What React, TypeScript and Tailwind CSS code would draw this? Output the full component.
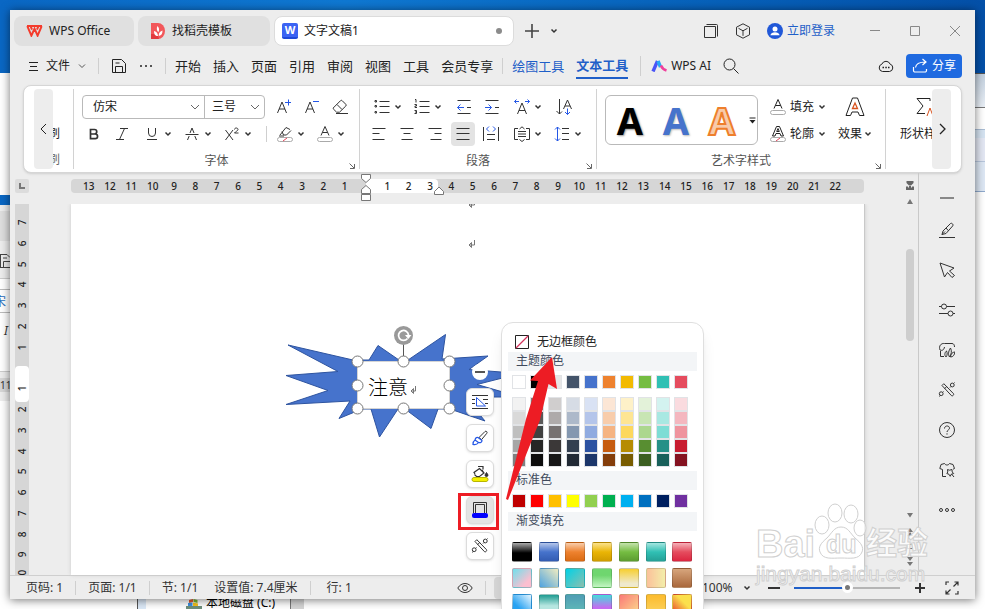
import React, { useState } from "react";
import clsx from "clsx";

interface IconProps {
  size?: number;
  className?: string;
  width?: number;
  children: React.ReactNode;
}

const Icon = ({ size = 16, className, width = 1, children }: IconProps) => (
  <svg
    width={size}
    height={size}
    viewBox={`0 0 ${size} ${size}`}
    fill="none"
    stroke="currentColor"
    strokeWidth={width}
    className={clsx("shrink-0", className)}
    aria-hidden="true"
  >
    {children}
  </svg>
);

const BLUE = "#2457e6";

const Caret = () => (
  <svg width="8" height="6" viewBox="0 0 8 6" fill="none" stroke="#333" strokeWidth="1.5" className="shrink-0">
    <path d="M1.500 1.500 4 4 6.500 1.500" />
  </svg>
);

const Chevron = () => (
  <svg width="10" height="6" viewBox="0 0 10 6" fill="none" stroke="#666" className="shrink-0">
    <path d="M1 1 5 5 9 1" />
  </svg>
);

const Divider = ({ className }: { className?: string }) => (
  <span className={clsx("w-px shrink-0 bg-[#cfcfcf]", className)} />
);

interface ToolProps {
  label: string;
  active?: boolean;
  children: React.ReactNode;
}

const Tool = ({ label, active, children }: ToolProps) => (
  <button aria-label={label} className="w-7 h-6 shrink-0 flex items-center justify-center">
    <span className={clsx("size-6 flex items-center justify-center rounded", active && "bg-[#e3e3e3]")}>{children}</span>
  </button>
);

const DropTool = ({ label, children }: ToolProps) => (
  <button aria-label={label} className="w-10 h-6 shrink-0 flex items-center">
    <span className="w-6 flex justify-center">{children}</span>
    <Caret />
  </button>
);

const Launcher = () => (
  <button aria-label="更多设置" className="absolute right-1 bottom-0 text-[#666]">
    <Icon size={6}>
      <path d="M.5.5 5 5M5.500 1v4.500H1" />
    </Icon>
  </button>
);

const WandIcon = () => (
  <Icon size={18}>
    <path d="m4 4.500 1.800-1.800 9.700 10c.8 1-1 2.800-2 2zM6.500 7.800l2.200-2.300" />
    <circle cx="3.200" cy="12.700" r="1.900" />
    <circle cx="14.300" cy="4" r="1.900" />
    <path d="M1.500 15.500l.7-1.200M16.500 1.500l-1 1M12 6.500l1-1M5.500 10.500l-1 1" />
  </Icon>
);

/* ---------- title bar ---------- */

const TitleBar = () => (
  <header className="h-[42px] shrink-0 flex items-center pl-1">
    <div className="flex gap-1 text-xs">
      <button className="w-[120px] h-[30px] rounded-lg bg-[#e0e0e0] flex items-center gap-1.5 px-3">
        <svg width="17" height="12" viewBox="0 0 17 12" fill="none" stroke="#f43b2c" strokeWidth="2">
          <path d="M1 1h15M1.300 1.200 5.400 10.600 8.500 3.600l3.100 7L15.700 1.200M6 4.600 4.600 1.200M11 4.600 12.400 1.200" />
        </svg>
        WPS Office
      </button>
      <button className="w-[132px] h-[30px] rounded-lg bg-[#e0e0e0] flex items-center gap-1.5 px-3">
        <svg width="16" height="16" viewBox="0 0 16 16">
          <path d="M1 0h7a7 8 0 0 1 0 16H1z" fill="#f2575a" />
          <path d="M1 11h6l2 5H1z" fill="#e23a3e" />
          <path d="M8 13c-3 0-4-2-4-5 2 .5 3.400 1.600 3.700 3.500M7.500 3c1.800 2 2 4 .8 6.300C6.500 7.500 6.500 5 7.500 3M8.800 13c2.800-.5 3.800-2.400 3.700-5.500-2 .7-3.500 2-3.700 4" fill="#fff" />
        </svg>
        找稻壳模板
      </button>
      <button className="w-[240px] h-[30px] rounded-lg bg-white border border-[#dcdcdc] flex items-center px-[7px] gap-1.5">
        <span className="size-4 rounded-xs bg-[#3b63f3] border-b-2 border-[#1f49d8] text-white text-[11px] leading-[14px] font-bold text-center">
          W
        </span>
        文字文稿1
        <span className="ml-auto mr-1 size-1.5 rounded-full bg-[#8b8b8b]" />
      </button>
    </div>
    <button aria-label="新建" className="w-9 flex justify-center text-[#444]">
      <Icon width={1.600}>
        <path d="M8 1v14M1 8h14" />
      </Icon>
    </button>
    <button aria-label="标签列表">
      <Caret />
    </button>
    <div className="ml-auto flex items-center text-[#333]">
      <button aria-label="窗口" className="w-8 flex justify-center">
        <Icon>
          <path d="M1.500 3.500h11v11h-11zM3.500 1.500h10a1 1 0 0 1 1 1v11" />
        </Icon>
      </button>
      <button aria-label="应用" className="w-8 flex justify-center">
        <Icon>
          <path d="M8 .8 14.500 4.200v7.600L8 15.200 1.500 11.800V4.200zM3.500 5.300 8 7.800l4.500-2.500M8 7.800v5" />
        </Icon>
      </button>
      <button className="ml-2 mr-5 flex items-center gap-1 text-xs text-[#1f5fc8]">
        <svg width="16" height="16" viewBox="0 0 16 16">
          <circle cx="8" cy="8" r="8" fill="#2158d8" />
          <circle cx="8" cy="6" r="2.500" fill="#fff" />
          <path d="M3.400 12.200c.6-4 8.600-4 9.200 0z" fill="#fff" />
        </svg>
        立即登录
      </button>
      <button aria-label="最小化" className="w-10 flex justify-center text-[#888]">
        <Icon size={10}>
          <path d="M0 4.500h10" />
        </Icon>
      </button>
      <button aria-label="最大化" className="w-10 flex justify-center text-[#888]">
        <Icon size={10}>
          <path d="M.5.5h9v9h-9z" />
        </Icon>
      </button>
      <button aria-label="关闭" className="w-10 flex justify-center text-[#888]">
        <Icon size={10}>
          <path d="m0 0 10 10M10 0 0 10" />
        </Icon>
      </button>
    </div>
  </header>
);

/* ---------- menu bar ---------- */

const MENU_TABS = ["开始", "插入", "页面", "引用", "审阅", "视图", "工具", "会员专享"];

const MenuBar = () => (
  <nav className="h-7 mb-[5px] shrink-0 flex items-center pl-[19px] pr-[13px] text-xs text-[#222]">
    <button className="flex items-center gap-2">
      <Icon size={9}>
        <path d="M0 .5h9M1 4.500h7M0 8.500h9" />
      </Icon>
      文件
      <svg width="8" height="5" viewBox="0 0 8 5" fill="none" stroke="#555">
        <path d="m1 .5 3 3 3-3" />
      </svg>
    </button>
    <Divider className="h-4 mx-3" />
    <button aria-label="保存">
      <Icon>
        <path d="M1.500 1.500h9l4 4v9h-13zM4.500 14v-5.500h7V14M4.500 5h4" />
      </Icon>
    </button>
    <button aria-label="更多" className="ml-3 text-[#555]">
      <Icon size={14} width={2}>
        <path d="M1 7h2M6 7h2M11 7h2" />
      </Icon>
    </button>
    <Divider className="h-4 ml-3 mr-[9px]" />
    <div className="flex gap-3 text-[13px] leading-6">
      {MENU_TABS.map((tab) => (
        <button key={tab}>{tab}</button>
      ))}
    </div>
    <Divider className="h-4 mx-[9px]" />
    <div className="flex gap-3 text-[13px] leading-6 text-[#1f5fc8]">
      <button>绘图工具</button>
      <button className="font-bold border-b-2 border-[#1f5fc8]">文本工具</button>
    </div>
    <Divider className="h-5 ml-3 mr-2.5" />
    <button className="flex items-center gap-1">
      <svg width="16" height="12" viewBox="0 0 16 12" fill="none" strokeWidth="3.400">
        <path d="M2 11.500 6.500 1" stroke="#4a54f7" />
        <path d="m7 1 2.500 6" stroke="#27a8f5" />
        <path d="M10 5.500c1 3 2.500 4 5.500 5" stroke="#f0409c" strokeWidth="2.600" />
      </svg>
      WPS AI
    </button>
    <button aria-label="搜索" className="ml-3">
      <Icon>
        <circle cx="6.500" cy="6.500" r="5.500" />
        <path d="m10.500 10.500 5 5" />
      </Icon>
    </button>
    <div className="ml-auto flex items-center gap-3">
      <button aria-label="云同步">
        <Icon>
          <path d="M4.500 13.500a3.800 3.800 0 0 1-.6-7.400 4.400 4.400 0 0 1 8.200 0 3.800 3.800 0 0 1-.6 7.400z" />
          <path d="M4.500 9.500h1.500M7.300 9.500h1.500M10 9.500h1.500" strokeWidth="1.500" />
        </Icon>
      </button>
      <button className="h-6 px-1.5 rounded bg-[#1f6ae0] text-white flex items-center gap-1">
        <Icon width={1.200}>
          <path d="M1.500 9v3.500a1.500 1.500 0 0 0 1.500 1.500h10a1.500 1.500 0 0 0 1.500-1.500V11M3.500 9.500c.5-4 4-5.500 10-5.500M10.500 1l3.500 3-3.500 3" />
        </Icon>
        分享
      </button>
    </div>
  </nav>
);

/* ---------- ribbon ---------- */

const RibbonGroup = ({ title, children }: { title: string; children: React.ReactNode }) => (
  <section className="relative h-20 shrink-0 flex flex-col border-r border-[#d2d2d2]">
    {children}
    <h2 className="mt-auto text-xs leading-4 text-center text-[#555]">{title}</h2>
    <Launcher />
  </section>
);

const FontGroup = () => (
  <RibbonGroup title="字体">
    <div className="flex pl-2 pt-1.5 pr-[5px] text-[#333]">
      <div className="h-6 mr-[5px] flex rounded border border-[#b9b9b9] text-xs text-[#222]">
        <label className="w-[121px] flex items-center pr-1">
          <select aria-label="字体" className="flex-1 appearance-none pl-2.5 outline-none">
            <option>仿宋</option>
            <option>宋体</option>
          </select>
          <Chevron />
        </label>
        <label className="w-[60px] flex items-center pr-1 border-l border-[#b9b9b9]">
          <select aria-label="字号" className="w-10 flex-1 appearance-none pl-[7px] outline-none">
            <option>三号</option>
            <option>四号</option>
          </select>
          <Chevron />
        </label>
      </div>
      <Tool label="增大字号">
        <Icon>
          <path d="m1.500 14 4.500-11 4.500 11M3 10h6" />
          <path d="M9 3.500h6M12.500.5v6" stroke={BLUE} />
        </Icon>
      </Tool>
      <Tool label="减小字号">
        <Icon>
          <path d="m1.500 14 4.500-11 4.500 11M3 10h6" />
          <path d="M9 2.500h6" stroke={BLUE} />
        </Icon>
      </Tool>
      <Tool label="清除格式">
        <Icon>
          <path d="M1.200 9 8.500 1.700a1.200 1.200 0 0 1 1.700 0l3.600 3.600a1.200 1.200 0 0 1 0 1.700L7.500 13.200H4.600L1.200 9.800zM5 5.500l5 5M4 14.500h12" />
        </Icon>
      </Tool>
    </div>
    <div className="flex items-center pl-1.5 pt-[3px] text-[#333]">
      <Tool label="加粗">
        <Icon size={12} width={1.700}>
          <path d="M2.500 1.500h4a2.200 2.200 0 0 1 0 4.500h-4zM2.500 6h4.700a2.300 2.300 0 0 1 0 4.700H2.500z" />
        </Icon>
      </Tool>
      <Tool label="倾斜">
        <Icon size={12}>
          <path d="M4 .5h8M0 11.500h8M8.500.5l-5 11" />
        </Icon>
      </Tool>
      <span className="w-1" />
      <DropTool label="下划线">
        <Icon size={12}>
          <path d="M2.500 0v5a3.500 3.500 0 0 0 7 0V0M1 11.500h10" />
        </Icon>
      </DropTool>
      <DropTool label="删除线">
        <Icon size={14}>
          <path d="M2.500 13 4.200 9M5 6l2-5 2 5M9.800 9l1.700 4M.5 7.500h13" />
        </Icon>
      </DropTool>
      <DropTool label="上标">
        <Icon size={14}>
          <path d="m.5 3 7.500 10M8 3 .5 13M9.500 2.500c0-2 3.500-2 3.500 0 0 1.300-2.500 2-3.500 3.500h4" />
        </Icon>
      </DropTool>
      <Divider className="h-4 mx-1.5" />
      <DropTool label="突出显示">
        <Icon>
          <path d="m3 9 6-7.500 4 2M5 5.500l1.500 3.500h3L14 4.500M2 10h5" />
          <rect x=".5" y="11.500" width="15" height="4" rx="2" stroke="#aaa" />
          <path d="m6 15 4-3" stroke="#e2455a" />
        </Icon>
      </DropTool>
      <DropTool label="字体颜色">
        <Icon>
          <path d="m4 9.500 4-9 4 9M5.500 6.500h5" />
          <rect x=".5" y="11.500" width="15" height="4" rx="2" stroke="#aaa" />
        </Icon>
      </DropTool>
    </div>
  </RibbonGroup>
);

const ParagraphGroup = () => (
  <RibbonGroup title="段落">
    <div className="flex pl-2.5 pt-1.5 text-[#333]">
      <DropTool label="项目符号">
        <Icon>
          <path d="M5.500 2.500h10M5.500 7.500h10M5.500 13.500h10" />
          <path d="M1 1.500h1.500v1.500H1zM1 6.500h1.500v1.500H1zM1 12.500h1.500v1.500H1z" />
        </Icon>
      </DropTool>
      <DropTool label="编号">
        <Icon>
          <path d="M5.500 2.500h10M5.500 7.500h10M5.500 13.500h10" />
          <path d="M1 .5h1v3M.5 5.500h2v1.500H1v1.500h2M.5 11.500h2v3h-2M1 13h1.500" />
        </Icon>
      </DropTool>
      <Tool label="减少缩进">
        <Icon>
          <path d="M1.500 1.500h13M1.500 14.500h13M11 8.500h4" />
          <path d="M1.500 8.500H8M4.500 5.500l-3 3 3 3" stroke={BLUE} />
        </Icon>
      </Tool>
      <Tool label="增加缩进">
        <Icon>
          <path d="M1.500 1.500h13M1.500 14.500h13M11 8.500h4" />
          <path d="M1 8.500h6.500M4.500 5.500l3 3-3 3" stroke={BLUE} />
        </Icon>
      </Tool>
      <span className="w-1" />
      <DropTool label="字符缩放">
        <Icon>
          <path d="m3.500 15 4.500-11 4.500 11M5 11.500h6" />
          <path d="M.5 2.500H5M2.500.5l-2 2 2 2M11 2.500h4.500M13.500.5l2 2-2 2" stroke={BLUE} />
        </Icon>
      </DropTool>
      <Tool label="排序">
        <Icon>
          <path d="M3.500 0v15M.5 12l3 3L6 12.500M7.500 10l4-9 4 9M9 7h5" />
          <path d="M11.500 9.500v6M9 13l2.500 2.500L14 13" stroke={BLUE} />
        </Icon>
      </Tool>
    </div>
    <div className="flex pl-[5px] pr-1.5 pt-[3px] text-[#333]">
      <Tool label="左对齐">
        <Icon>
          <path d="M1.500 2.500h13M1.500 7.500h7M1.500 13.500h12" />
        </Icon>
      </Tool>
      <Tool label="居中">
        <Icon>
          <path d="M1.500 2.500h13M4.500 7.500h7M2.500 13.500h11" />
        </Icon>
      </Tool>
      <Tool label="右对齐">
        <Icon>
          <path d="M1.500 2.500h13M7.500 7.500h7M3.500 13.500h11" />
        </Icon>
      </Tool>
      <Tool label="两端对齐" active>
        <Icon>
          <path d="M1.500 2.500h13M1.500 7.500h13M1.500 13.500h13" />
        </Icon>
      </Tool>
      <Tool label="分散对齐">
        <Icon>
          <path d="M.5 1v14M15.500 1v14M4 8.500h8M4 13.500h8" />
          <path d="m6 .5-2.500 2.500L6 5.500M10 .5l2.500 2.500-2.500 2.500" stroke={BLUE} />
        </Icon>
      </Tool>
      <span className="w-[5px]" />
      <DropTool label="对齐文本">
        <Icon>
          <path d="M4 2.500H.5v11H4M12 2.500h3.500v11H12M4 5.500h8M4 8h8M4 10.500h8M5.500 3 8 .8 10.500 3M5.500 13.500 8 15.500l2.500-2" />
        </Icon>
      </DropTool>
      <DropTool label="行距">
        <Icon>
          <path d="M8 2.500h7M8 7.500h7M8 13.500h7" />
          <path d="M3.500 1v14M1 3.500 3.500 1 6 3.500M1 12.500 3.500 15 6 12.500" stroke={BLUE} />
        </Icon>
      </DropTool>
    </div>
  </RibbonGroup>
);

const WordArtGroup = () => (
  <RibbonGroup title="艺术字样式">
    <div className="flex pl-2 pt-1.5 pr-[13px] text-xs text-[#222]">
      <div className="w-[153px] h-[50px] rounded-md border border-[#b9b9b9] flex items-center pl-px text-[38px] leading-none font-bold">
        <button className="w-[46px] text-black [text-shadow:1px_1px_2px_#999]">A</button>
        <button className="w-[46px] text-[#4673cc] [text-shadow:1px_1px_2px_#bbb]">A</button>
        <button className="w-[46px] text-[#f8cbaa] [-webkit-text-stroke:2px_#ee7f2c]">A</button>
        <button aria-label="更多样式" className="pl-1">
          <Icon size={7}>
            <path d="M.5 1h6" />
            <path d="M.5 3h6L3.500 6.500z" fill="currentColor" stroke="none" />
          </Icon>
        </button>
      </div>
      <div className="ml-3 flex flex-col gap-[3px]">
        <button className="h-6 flex items-center gap-1">
          <Icon>
            <path d="m4 9.500 4-9 4 9M5.500 6.500h5" />
            <rect x=".5" y="11.500" width="15" height="4" rx="2" stroke="#aaa" />
          </Icon>
          填充
          <Caret />
        </button>
        <button className="h-6 flex items-center gap-1">
          <Icon>
            <path d="M2.500 10 6.500.5h3l4 9.500h-2.500L10 7.500H6L5 10zM6.700 5.500 8 2.500l1.300 3z" />
            <rect x=".5" y="11.500" width="15" height="4" rx="2" stroke="#aaa" />
            <path d="m6 15 4-3" stroke="#e2455a" />
          </Icon>
          轮廓
          <Caret />
        </button>
      </div>
      <button className="ml-3 flex flex-col items-center gap-[3px]">
        <span className="h-6 flex items-center">
          <Icon size={20}>
            <path d="M1 18.500 7.500 1h5L19 18.500h-4.500L13 15H7l-1.500 3.500z" />
            <path d="M7.500 11.500 10 6l2.500 5.500z" stroke="#d8531e" strokeWidth="1.300" />
          </Icon>
        </span>
        <span className="h-6 flex items-center gap-0.5">
          效果
          <Caret />
        </span>
      </button>
    </div>
  </RibbonGroup>
);

const Ribbon = () => (
  <div className="h-[88px] ml-[13px] mr-[13px] px-2.5 shrink-0 flex items-center rounded-lg bg-white border border-[#d6d6d6] shadow">
    <button aria-label="向左滚动" className="w-[19px] h-20 shrink-0 rounded bg-[#ededed] flex items-center justify-center">
      <Icon size={12}>
        <path d="M8 1 3 6l5 5" />
      </Icon>
    </button>
    <div className="w-[21px] h-20 shrink-0 pt-9 border-r border-[#d2d2d2] text-xs">
      <div className="w-[7px] h-[18px] overflow-hidden flex justify-end leading-[18px]">刷</div>
      <div className="w-[7px] h-[18px] mt-2 overflow-hidden flex justify-end leading-[18px] text-[#666]">刷</div>
    </div>
    <FontGroup />
    <ParagraphGroup />
    <WordArtGroup />
    <div className="flex-1 min-w-0 h-20 pl-3.5 overflow-hidden text-xs text-[#222]">
      <button className="pt-1.5 flex flex-col items-center gap-[3px]">
        <span className="h-6 flex items-center">
          <Icon size={20}>
            <path d="M16 4V1.500H3l6 7.500-6 7.500h8" />
            <path d="m13 19 3-8 3 8" stroke="#d8531e" />
          </Icon>
        </span>
        <span className="h-6 leading-6 whitespace-nowrap">形状样式</span>
      </button>
    </div>
    <button aria-label="向右滚动" className="w-[19px] h-20 shrink-0 rounded bg-[#ededed] flex items-center justify-center">
      <Icon size={12} width={1.300}>
        <path d="m4 1 5 5-5 5" />
      </Icon>
    </button>
  </div>
);

/* ---------- rulers ---------- */

const H_MARKS = Array.from({ length: 36 }, (_, i) => Math.abs(i - 13));
const V_MARKS = Array.from({ length: 18 }, (_, i) => Math.abs(i - 7));

const HorizontalRuler = () => (
  <div className="h-[31px] shrink-0 flex items-start pt-1.5">
    <div className="w-[61px] shrink-0 pl-[5px]">
      <button aria-label="制表符" className="size-3.5 rounded-xs bg-[#dcdcdc] flex items-center justify-center">
        <Icon size={6} width={2} className="text-[#777]">
          <path d="M1 0v5h5" />
        </Icon>
      </button>
    </div>
    <div className="relative flex-1 h-3.5 rounded bg-[#d6d6d6] pl-[7px] pr-[18px]">
      <span className="absolute left-[295px] w-[72px] h-3.5 rounded-r bg-white" />
      <div className="relative grid grid-cols-36 text-[10px] leading-3.5 font-medium text-center text-[#222]">
        {H_MARKS.map((n, i) => (
          <span key={i}>{n > 0 && n}</span>
        ))}
      </div>
      <svg className="absolute left-[289px] -top-[6px]" width="86" height="32" viewBox="0 0 86 32" fill="#fff" stroke="#777">
        <path d="M1.500 1.500h9v4L6 9.500l-4.500-4zM1.500 20.500v-4l4.500-4 4.500 4v4zM1.500 21.500h9v6h-9zM74.500 21.500v-3l4.500-4.500 4.500 4.500v3z" />
      </svg>
    </div>
    <div className="w-[54px] shrink-0 flex justify-end pr-1 pt-0.5">
      <svg width="8" height="9" viewBox="0 0 8 9" fill="#666">
        <path d="M.5 0h7v2L5 4.500H3L.5 2zM0 5.500h2v1h1V5h2v1.500h1v-1h2V9H0z" />
      </svg>
    </div>
  </div>
);

const VerticalRuler = () => (
  <div className="relative w-3.5 ml-[5px] mr-[42px] shrink-0 pt-2 bg-[#d6d6d6] overflow-hidden">
    <span className="absolute top-[162px] left-0 w-3.5 h-9 rounded bg-white" />
    <div className="relative h-[374px] grid grid-rows-18 text-[10px] leading-3.5 font-medium text-[#222]">
      {V_MARKS.map((n, i) => (
        <span key={i} className="-rotate-90 flex items-center justify-center">
          {n > 0 && n}
        </span>
      ))}
    </div>
  </div>
);

/* ---------- drawing on the page ---------- */

const HANDLES = [
  [357.5, 361.5],
  [403.5, 361.5],
  [449.5, 361.5],
  [357.5, 385.5],
  [449.5, 385.5],
  [357.5, 408.5],
  [403.5, 408.5],
  [449.5, 408.5],
];

const Explosion = () => (
  <div className="absolute left-[208px] top-[120px] w-[240px] h-[120px]">
    <svg width="240" height="120" viewBox="279 324 240 120">
      <path
        d="M288 345 353 360H369L378 345.500 399 360H408L445.500 334.500 442 359 488 356 469 369.500 520 373.500 477 384.500 520 397 490 397 471 404 485 421 450 409H438L431 428.500 405 409H398L379.500 437 371 409H362L339 418.500 350 401 286 404.500 328 390.500 286 375.500 338 371.500z"
        fill="#4673cc"
        stroke="#2e54a0"
      />
      <rect x="357.500" y="361.500" width="92" height="47" fill="#fff" stroke="#d5d5d5" />
      <path d="M403.500 344v14" stroke="#555" />
      <circle cx="403.500" cy="335.500" r="9.500" fill="#999" />
      <path d="M407.500 338.500a5 5 0 1 1 1-3.500" fill="none" stroke="#fff" strokeWidth="1.800" />
      <path d="M405 335h6.500l-3.200 4z" fill="#fff" />
      {HANDLES.map(([x, y]) => (
        <circle key={`${x}-${y}`} cx={x} cy={y} r="5.500" fill="#fff" stroke="#777" />
      ))}
      <path d="M415.500 386v5h-4M413.500 388.500l-2.500 2.500 2.500 2.500z" fill="none" stroke="#777" />
    </svg>
    <p className="absolute left-[89px] top-[50px] text-[20px] leading-7 font-light text-black">注意</p>
  </div>
);

const ParagraphMark = ({ className }: { className?: string }) => (
  <svg width="7" height="8" viewBox="0 0 7 8" fill="none" stroke="#777" className={className}>
    <path d="M6.500 0v5h-5M3.500 2.500 1 5l2.500 2.500z" />
  </svg>
);

const QuickButton = ({ label, active, children }: ToolProps) => (
  <button
    aria-label={label}
    className={clsx(
      "size-7 rounded-md border border-[#dcdcdc] shadow flex items-center justify-center text-[#333]",
      active ? "bg-[#e3e3e3]" : "bg-white",
    )}
  >
    {children}
  </button>
);

const QuickTools = () => (
  <div className="absolute left-[395px] top-[160px] w-7 flex flex-col items-center gap-2">
    <button aria-label="收起" className="size-4 rounded-full bg-white flex items-center justify-center text-[#555]">
      <Icon size={10} width={2}>
        <path d="M0 5h10" />
      </Icon>
    </button>
    <QuickButton label="布局选项">
      <Icon size={18}>
        <path d="M1 2.500h16M1 6.500h3M12 6.500h5M1 10.500h3M14 10.500h3M1 15.500h16" />
        <path d="M5.500 4.500v8.500h9z" stroke={BLUE} fill="#fff" />
      </Icon>
    </QuickButton>
    <QuickButton label="形状样式">
      <Icon>
        <path d="m7 7.500 6-6c1-1 2.800.5 1.800 1.800L9.500 9.700z" />
        <path d="m6 7.500 4 3c0 2-2 2.500-3.500 2C5.500 14 3 15 1 14.500c0-2 .5-3.500 2-4.500.3-1.500 1.500-2.700 3-2.500zM3 10l3.500 2.500" stroke={BLUE} strokeWidth="1.200" />
      </Icon>
    </QuickButton>
    <QuickButton label="形状填充">
      <Icon size={18}>
        <path d="M4 9 3 7.500 8.500 3.500 13 8l-4.500 3.500H5.500L3.500 9.500M7 1.500h5v3M13 8l-2-3" strokeWidth="1.200" />
        <path d="m15.500 7.500 1.500 2.500a1.500 1.500 0 0 1-3 0z" fill="#333" />
        <rect x="1" y="12.500" width="16" height="4" rx="2" fill="#f4f000" stroke="#b9b600" />
      </Icon>
    </QuickButton>
    <QuickButton label="形状轮廓" active>
      <Icon size={18}>
        <path d="M2.500 12V1.500h13V12M4.500 12V3.500h9V12" />
        <rect x="1" y="12" width="16" height="5" rx="2" fill="#00f" stroke="none" />
      </Icon>
    </QuickButton>
    <QuickButton label="智能美化">
      <WandIcon />
    </QuickButton>
  </div>
);

/* ---------- outline colour menu ---------- */

const BASE_COLORS = ["#ffffff", "#000000", "#e7e6e6", "#44546a", "#4673cc", "#ee822f", "#f2ba02", "#75bd42", "#30c0b4", "#e54c5e"];

const SHADES = [
  ["#f2f2f2", "#7f7f7f", "#d0cece", "#d6dce5", "#d9e2f4", "#fce6d5", "#fef1c8", "#e3f2d9", "#d3f3f0", "#fadbdf"],
  ["#d9d9d9", "#595959", "#aeaaaa", "#adb9ca", "#b4c5ea", "#f8cdab", "#fee593", "#c8e5b3", "#a9e8e2", "#f4b7bf"],
  ["#bfbfbf", "#404040", "#767171", "#8497b0", "#90abe0", "#f5b482", "#fdd85e", "#acd78e", "#7eddd5", "#ef949e"],
  ["#a6a6a6", "#262626", "#3b3838", "#333f50", "#2c52a1", "#c65c10", "#b68c02", "#588e31", "#249087", "#c81d31"],
  ["#808080", "#0d0d0d", "#171717", "#222a35", "#1d376b", "#843e0b", "#795d01", "#3b5f21", "#18605a", "#851321"],
];

const STANDARD_COLORS = ["#c00000", "#ff0000", "#ffc000", "#ffff00", "#92d050", "#00b050", "#00b0f0", "#0070c0", "#002060", "#7030a0"];

const GRADIENTS = [
  "linear-gradient(#aaa, #000 55%)",
  "linear-gradient(#b5c6ea, #4673cc 50%, #335cb2)",
  "linear-gradient(#f8cdab, #ee822f 50%, #d96a12)",
  "linear-gradient(#fbe28c, #eab505 50%, #cf9c00)",
  "linear-gradient(#c4e2ac, #75bd42 50%, #5c9c30)",
  "linear-gradient(#a4e6e0, #30c0b4 50%, #25a096)",
  "linear-gradient(#f5b0b8, #e54c5e 50%, #dc2540)",
  "linear-gradient(135deg, #6fe0ec, #fbbfd0 75%)",
  "linear-gradient(45deg, #4fa3e0, #f0ecc0)",
  "linear-gradient(135deg, #00d2e6, #8fbfae)",
  "linear-gradient(#6fd66f 35%, #c3f5c3)",
  "linear-gradient(#f7cf30, #efe9cc 80%)",
  "linear-gradient(90deg, #fbc19a, #f3eeaa)",
  "linear-gradient(#d7a57c, #a9683c)",
  "linear-gradient(45deg, #27a2f2 30%, #e8f7ff)",
  "linear-gradient(#1f9c92, #b6e6e0 60%)",
  "linear-gradient(#4f9db4, #62bcb8)",
  "linear-gradient(#45dcdc, #c46cf0 70%)",
  "linear-gradient(135deg, #fb7a78, #fbd98c)",
  "linear-gradient(#fcbb2d, #fcd35e)",
  "linear-gradient(45deg, #e8452c, #fbe04c 60%)",
];

interface SwatchRowProps {
  colors: string[];
  onPick: (color: string) => void;
}

const SwatchRow = ({ colors, onPick }: SwatchRowProps) => (
  <div className="flex gap-1 px-2.5">
    {colors.map((color) => (
      <button
        key={color}
        aria-label={color}
        onClick={() => onPick(color)}
        className="size-3.5 border border-[#e1e3e6]"
        style={{ backgroundColor: color }}
      />
    ))}
  </div>
);

const MenuHeading = ({ children }: { children: React.ReactNode }) => (
  <h3 className="h-[19px] mx-1.5 px-2 bg-[#f3f5f7] text-xs leading-[18px] text-[#3f4a5c]">{children}</h3>
);

const ColorMenu = () => {
  const [, setColor] = useState<string>("");

  return (
    <div className="absolute z-10 left-[430px] top-[118px] w-[203px] h-[310px] pt-2 rounded-xl bg-white border border-[#dfdfdf] shadow-lg">
      <button className="h-[21px] pl-[13px] flex items-center gap-2 text-xs text-[#222]" onClick={() => setColor("")}>
        <Icon size={14}>
          <path d="M.5.5h13v13H.5z" />
          <path d="m1 13 12-12" stroke="#d4335c" strokeWidth="1.300" />
        </Icon>
        无边框颜色
      </button>
      <MenuHeading>主题颜色</MenuHeading>
      <div className="py-1">
        <SwatchRow colors={BASE_COLORS} onPick={setColor} />
        <div className="mt-2">
          {SHADES.map((row) => (
            <SwatchRow key={row[0]} colors={row} onPick={setColor} />
          ))}
        </div>
      </div>
      <MenuHeading>标准色</MenuHeading>
      <div className="py-1">
        <SwatchRow colors={STANDARD_COLORS} onPick={setColor} />
      </div>
      <MenuHeading>渐变填充</MenuHeading>
      <div className="mx-2.5 w-[180px] mt-[11px] grid grid-cols-7 gap-x-[7px] gap-y-1.5">
        {GRADIENTS.map((bg) => (
          <button
            key={bg}
            aria-label="渐变"
            className="size-5 rounded-xs border border-black/15"
            style={{ backgroundImage: bg }}
          />
        ))}
      </div>
    </div>
  );
};

const Annotations = () => (
  <>
    <span className="absolute z-20 left-[387px] top-[289px] w-[41px] h-[37px] border-3 border-[#ed1c24]" />
    <svg className="absolute z-20 left-[429px] top-[148px] pointer-events-none" width="64" height="152" viewBox="500 352 64 152">
      <path d="M552 357 530 380.500 538 381 526 419 506 499 508 500 540 420 548.500 384 557 389z" fill="#ed1c24" />
    </svg>
  </>
);

/* ---------- workspace ---------- */

const ScrollBar = () => (
  <div className="w-[53px] shrink-0 flex justify-end pr-[3px]">
    <div className="w-[10px] flex flex-col items-center text-[#777]">
      <svg width="6" height="5" viewBox="0 0 6 5" fill="currentColor" className="-mt-[5px]">
        <path d="M3 0 6 5H0z" />
      </svg>
      <span className="mt-[45px] w-2 h-[92px] rounded-full bg-[#cecece]" />
      <svg width="6" height="54" viewBox="0 0 6 54" className="mt-auto mb-2" fill="currentColor">
        <path d="M0 0h6L3 4.500zM3 15l3 4H0zM3 19l3 4H0zM0 44h6l-3 4zM0 49h6l-3 4z" />
        <rect x=".5" y="31.500" width="5" height="4" fill="none" stroke="currentColor" />
      </svg>
    </div>
  </div>
);

const SIDE_ICONS = [
  {
    label: "样式",
    icon: <path d="M0 15.500h16M3 12.500l1-3.500 7.500-7.500c1-1 3.300 1 2.300 2.300L7 11.500zM7 6l2.500 2.800M3 12.500l3-3" />,
  },
  {
    label: "选择",
    icon: <path d="m1 1 14 5-4.500 3 5 4.500-2.500 2-4.500-5-3 4.500z" />,
  },
  {
    label: "属性",
    icon: (
      <>
        <path d="M0 4.500h2.500M7.500 4.500H16M0 11.500h9M14 11.500h2" />
        <circle cx="5" cy="4.500" r="2.500" />
        <circle cx="11.500" cy="11.500" r="2.500" />
      </>
    ),
  },
  {
    label: "素材",
    icon: (
      <>
        <path d="M5 14.500H1.500V9M1 8c-1.500-4 1-7 4.500-6.500H13c2 0 2.500 2 2.500 3.500M1 8c2 1 4 0 4.500-3" />
        <path d="M7 15C5 13 6 10 7.500 9c1 2 1 4-.5 6zM10.500 15C8.500 12 10 8 11.500 6c1.500 3 1 6-1 9zM11.500 15c0-3 2-5 4.500-5-.5 3-2 5-4.500 5z" />
      </>
    ),
  },
  { label: "智能", icon: null },
  {
    label: "帮助",
    icon: (
      <>
        <circle cx="8" cy="8" r="7.500" />
        <path d="M5.500 6.500c0-3.300 5-3.300 5-.3 0 1.800-2.500 1.800-2.500 3.800M8 11.300v1.300" />
      </>
    ),
  },
  {
    label: "皮肤",
    icon: (
      <>
        <path d="M7 14.500H3.500V7.500L.8 6.500 2 2.500 5.500 1.500c1 2 4 2 5 0L14 2.500l1.500 4-1.500.7" />
        <path d="m8.500 7.500 2 .7 2.500-.7.200 2.500 1.500 1.500-2.500.8-1 2-1.200-2-2.200-.8 1-1.500zM12.500 12l2.500 3" />
      </>
    ),
  },
  {
    label: "更多",
    icon: (
      <>
        <circle cx="2" cy="8" r="1.500" />
        <circle cx="8" cy="8" r="1.500" />
        <circle cx="14" cy="8" r="1.500" />
      </>
    ),
  },
];

const SidePanel = () => (
  <aside className="w-[57px] shrink-0 pt-[13px] border-l border-[#c9c9c9] flex flex-col items-center text-[#333]">
    <button aria-label="收起面板" className="h-6 text-[#888]">
      <Icon size={14} width={2}>
        <path d="M0 7h14" />
      </Icon>
    </button>
    {SIDE_ICONS.map(({ label, icon }) => (
      <button key={label} aria-label={label} className="size-10 flex items-center justify-center">
        {icon ? <Icon>{icon}</Icon> : <WandIcon />}
      </button>
    ))}
  </aside>
);

const Workspace = () => (
  <main className="flex-1 min-h-0 flex">
    <div className="flex-1 min-w-0 flex flex-col">
      <HorizontalRuler />
      <div className="flex-1 min-h-0 flex">
        <VerticalRuler />
        <div className="relative flex-1 min-w-0 bg-white border-r border-[#c9c9c9] shadow-[0_0_4px_#ccc] [clip-path:inset(0_-8px_-60px_-8px)]">
          <ParagraphMark className="absolute left-[397px] -top-[4px]" />
          <ParagraphMark className="absolute left-[397px] top-9" />
          <Explosion />
          <QuickTools />
          <ColorMenu />
          <Annotations />
        </div>
        <ScrollBar />
      </div>
    </div>
    <SidePanel />
  </main>
);

/* ---------- status bar ---------- */

const StatusBar = () => {
  const [zoom, setZoom] = useState(50);

  return (
    <footer className="h-6 shrink-0 px-4 flex items-center border-t border-[#cfcfcf] text-xs text-[#333]">
      <span>页码: 1</span>
      <Divider className="h-3.5 mx-3" />
      <span>页面: 1/1</span>
      <Divider className="h-3.5 mx-3" />
      <span>节: 1/1</span>
      <span className="ml-4">设置值: 7.4厘米</span>
      <Divider className="h-3.5 ml-3 mr-4" />
      <span>行: 1</span>
      <div className="ml-auto flex items-center">
        <button aria-label="护眼模式">
          <Icon>
            <path d="M.8 8c3.500-6 11-6 14.400 0-3.400 6-10.900 6-14.400 0z" />
            <circle cx="8" cy="8" r="2.500" />
          </Icon>
        </button>
        <Divider className="h-3.5 mx-3" />
        <button aria-label="页面视图" className="-ml-1 w-7 h-[22px] rounded bg-[#d6d6d6] flex items-center justify-center">
          <Icon size={14}>
            <path d="M1.500.5h11v13h-11zM4 4h6M4 7h6M4 10h6" />
          </Icon>
        </button>
        <label className="ml-[180px] flex items-center gap-2.5">
          <select aria-label="显示比例" className="appearance-none outline-none">
            <option>100%</option>
          </select>
          <Caret />
        </label>
        <button aria-label="缩小" className="ml-4">
          <Icon size={14} width={2}>
            <path d="M1 7h12" />
          </Icon>
        </button>
        <input
          type="range"
          aria-label="缩放"
          value={zoom}
          onChange={(e) => setZoom(Number(e.target.value))}
          className="mx-[13px] w-[106px] h-0.5 appearance-none bg-[linear-gradient(90deg,#1f5fc8_50%,#b5b5b5_50%)] [&::-webkit-slider-thumb]:appearance-none [&::-webkit-slider-thumb]:size-[11px] [&::-webkit-slider-thumb]:rounded-full [&::-webkit-slider-thumb]:bg-[#777] [&::-webkit-slider-thumb]:border-3 [&::-webkit-slider-thumb]:border-white"
        />
        <button aria-label="放大">
          <Icon size={14} width={2}>
            <path d="M2 7h10M7 2v10" />
          </Icon>
        </button>
        <button aria-label="全屏" className="ml-[18px]">
          <Icon size={14} width={1.200}>
            <path d="M1 4V1h3M8.500 5.500 13 1M9.500 1H13v3.500M5.500 8.500 1 13M1 9.500V13h3.500M10 13h3v-3" />
          </Icon>
        </button>
      </div>
    </footer>
  );
};

/* ---------- desktop behind the window ---------- */

const Desktop = () => (
  <div className="absolute inset-0 bg-white text-[#333]" aria-hidden="true">
    <div className="absolute inset-x-0 top-0 h-[205px] bg-linear-to-r from-[#0a67c4] via-[#0f78d2] via-35% to-[#0450a8]" />
    <div className="absolute left-0 top-[73px] w-5 h-[122px] bg-white" />
    <div className="absolute left-0 top-[205px] w-5 bottom-0 bg-white text-xs">
      <div className="h-[74px] pt-1.5 bg-[#ededed] border-b border-[#ccc]">
        <div className="h-[30px] bg-[#dedede]" />
        <svg width="10" height="15" viewBox="0 0 10 15" className="mt-3" fill="none" stroke="#444">
          <path d="M0 1.500h7l3 3M0 14.500h10M3.500 14V8.500H10M3 5h4M.5 1v13" />
        </svg>
      </div>
      <div className="h-6 mt-2.5 border-y border-[#bbb] w-5 overflow-hidden flex">
        <span className="-ml-1.5 leading-6 text-[#2a6fc0]">宋</span>
      </div>
      <div className="mt-2.5 pl-1 italic">I</div>
      <div className="mt-8 h-[30px] bg-[#ededed] border-t border-[#ccc] pt-1.5">
        <div className="h-3.5 bg-[#d6d6d6] text-[10px] leading-3.5">11</div>
      </div>
    </div>
    <div className="absolute right-0 top-[73px] w-5 bottom-0 bg-white border-t border-[#555]">
      <div className="h-[34px] bg-linear-to-b from-[#c3d0de] to-[#e9eff6] border-b border-[#777]" />
      <div className="h-[22px] border-b border-[#a9bdd4]" />
      <div className="h-2 bg-[#d5e3f1]" />
      <div className="h-6 bg-[#e3e7f3] border-b border-[#b7c6dc]" />
      <div className="h-[30px] bg-[#dde7f4] border-b border-[#8fa9cc]" />
    </div>
    <div className="absolute left-[137px] bottom-0 h-3 flex items-start border-l border-[#555] text-xs leading-3 text-black">
      <span className="w-2 h-3 bg-[#dce9f7]" />
      <svg width="16" height="12" viewBox="0 0 16 12" className="ml-10">
        <path d="M0 9h16v3H0z" fill="#6d8f7c" />
        <path d="m3 3 4-1v3L3 6z" fill="#e85b2c" />
        <path d="m7.500 2 4 1v3l-4-1z" fill="#7ab82f" />
        <path d="m2 6 4.500-.5V9H2z" fill="#3b8fe0" />
        <path d="m7 5.500 5 1V9H7z" fill="#f5c21c" />
      </svg>
      <span className="ml-1 w-[84px]">本地磁盘 (C:)</span>
      <span className="w-3.5 h-3 border-l border-[#777] bg-[#d5d5d5]" />
    </div>
  </div>
);

const Watermark = () => (
  <div className="absolute z-30 left-[756px] top-[500px] w-[180px] h-[90px] pointer-events-none font-['Liberation_Sans','Noto_Sans_CJK_SC',sans-serif] text-white/80 [-webkit-text-stroke:1px_#d0d0d0]">
    <svg width="180" height="90" className="absolute inset-0" fill="#fff" fillOpacity=".7" stroke="#d0d0d0">
      <ellipse cx="66" cy="25" rx="7" ry="9" />
      <ellipse cx="79" cy="13" rx="7" ry="9" />
      <ellipse cx="95" cy="14" rx="7" ry="9" />
      <ellipse cx="104" cy="28" rx="6" ry="8" />
      <path d="M85 27c7 0 9 6 14 11 6 5 9 9 7 14-3 8-12 6-21 6s-18 2-21-6c-2-5 1-9 7-14 5-5 7-11 14-11z" />
    </svg>
    <div className="relative flex items-center h-9 mt-[26px] font-bold leading-9">
      <span className="w-[70px] text-[38px]">Bai</span>
      <span className="w-[40px] text-[25px]">du</span>
      <span className="text-[31px] whitespace-nowrap">经验</span>
    </div>
    <div className="relative text-[21px] leading-6">jingyan.baidu.com</div>
  </div>
);

const App = () => (
  <div className="relative h-screen p-2.5 overflow-hidden font-['Noto_Sans','Noto_Sans_CJK_SC',sans-serif] text-[#222]">
    <Desktop />
    <div className="relative h-full flex flex-col bg-[#ededed] shadow-[0_1px_9px_rgba(0,0,0,0.55)]">
      <TitleBar />
      <MenuBar />
      <Ribbon />
      <Workspace />
      <StatusBar />
    </div>
    <Watermark />
  </div>
);

export default App;
